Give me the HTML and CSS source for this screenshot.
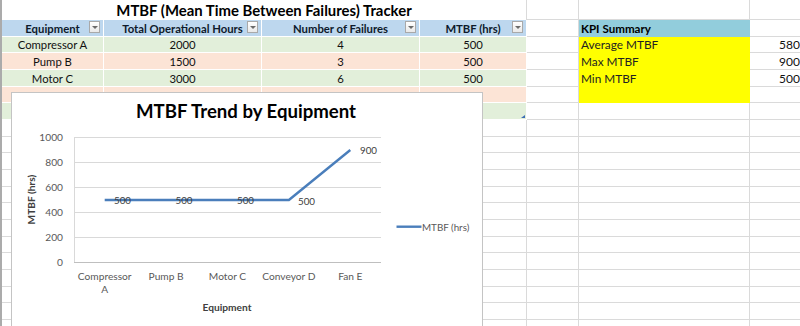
FILE: index.html
```html
<!DOCTYPE html>
<html lang="en">
<head>
    <meta charset="UTF-8">
    <title>MTBF Tracker</title>
    <link rel="stylesheet" href="styles.css">
</head>
<body>
    <div class="sheet">
        <!-- row 1: title -->
        <div class="c title">MTBF (Mean Time Between Failures) Tracker</div>
        <div class="c"></div><div class="c"></div><div class="c"></div>

        <!-- row 2: table header + kpi header -->
        <div class="c t hdr">Equipment<span class="filter"></span></div>
        <div class="c t hdr">Total Operational Hours<span class="filter"></span></div>
        <div class="c t hdr">Number of Failures<span class="filter"></span></div>
        <div class="c t hdr">MTBF (hrs)<span class="filter"></span></div>
        <div class="c"></div>
        <div class="c kpi-h">KPI Summary</div>
        <div class="c"></div>

        <div class="c t g">Compressor A</div><div class="c t g">2000</div><div class="c t g">4</div><div class="c t g">500</div>
        <div class="c"></div><div class="c y">Average MTBF</div><div class="c num">580</div>

        <div class="c t p">Pump B</div><div class="c t p">1500</div><div class="c t p">3</div><div class="c t p">500</div>
        <div class="c"></div><div class="c y">Max MTBF</div><div class="c num">900</div>

        <div class="c t g">Motor C</div><div class="c t g">3000</div><div class="c t g">6</div><div class="c t g">500</div>
        <div class="c"></div><div class="c y">Min MTBF</div><div class="c num">500</div>

        <div class="c t p"></div><div class="c t p"></div><div class="c t p"></div><div class="c t p"></div>
        <div class="c"></div><div class="c y"></div><div class="c"></div>

        <div class="c t g"></div><div class="c t g"></div><div class="c t g"></div><div class="c t g corner"><span class="resize"></span></div>
        <div class="c"></div><div class="c"></div><div class="c"></div>

        <!-- empty rows -->
        <div class="c"></div><div class="c"></div><div class="c"></div><div class="c"></div><div class="c"></div><div class="c"></div><div class="c"></div>
        <div class="c"></div><div class="c"></div><div class="c"></div><div class="c"></div><div class="c"></div><div class="c"></div><div class="c"></div>
        <div class="c"></div><div class="c"></div><div class="c"></div><div class="c"></div><div class="c"></div><div class="c"></div><div class="c"></div>
        <div class="c"></div><div class="c"></div><div class="c"></div><div class="c"></div><div class="c"></div><div class="c"></div><div class="c"></div>
        <div class="c"></div><div class="c"></div><div class="c"></div><div class="c"></div><div class="c"></div><div class="c"></div><div class="c"></div>
        <div class="c"></div><div class="c"></div><div class="c"></div><div class="c"></div><div class="c"></div><div class="c"></div><div class="c"></div>
        <div class="c"></div><div class="c"></div><div class="c"></div><div class="c"></div><div class="c"></div><div class="c"></div><div class="c"></div>
        <div class="c"></div><div class="c"></div><div class="c"></div><div class="c"></div><div class="c"></div><div class="c"></div><div class="c"></div>
        <div class="c"></div><div class="c"></div><div class="c"></div><div class="c"></div><div class="c"></div><div class="c"></div><div class="c"></div>
        <div class="c"></div><div class="c"></div><div class="c"></div><div class="c"></div><div class="c"></div><div class="c"></div><div class="c"></div>
        <div class="c"></div><div class="c"></div><div class="c"></div><div class="c"></div><div class="c"></div><div class="c"></div><div class="c"></div>
        <div class="c"></div><div class="c"></div><div class="c"></div><div class="c"></div><div class="c"></div><div class="c"></div><div class="c"></div>
        <div class="c"></div><div class="c"></div><div class="c"></div><div class="c"></div><div class="c"></div><div class="c"></div><div class="c"></div>

        <!-- floating chart -->
        <svg class="chart" width="472" height="240" viewBox="0 0 472 240">
            <rect x="0.5" y="0.5" width="471" height="260" fill="#fff" stroke="#c4c4c4"/>
            <text class="chart-title" x="235" y="26" text-anchor="middle">MTBF Trend by Equipment</text>

            <g stroke="#d9d9d9" stroke-width="1">
                <line x1="63" y1="45.5" x2="370" y2="45.5"/>
                <line x1="63" y1="70.5" x2="370" y2="70.5"/>
                <line x1="63" y1="95.5" x2="370" y2="95.5"/>
                <line x1="63" y1="120.5" x2="370" y2="120.5"/>
                <line x1="63" y1="145.5" x2="370" y2="145.5"/>
                <line x1="63.5" y1="45" x2="63.5" y2="170"/>
            </g>
            <line x1="63" y1="170.5" x2="370" y2="170.5" stroke="#bfbfbf"/>

            <g class="tick" text-anchor="end">
                <text x="52" y="49">1000</text>
                <text x="52" y="74">800</text>
                <text x="52" y="99">600</text>
                <text x="52" y="124">400</text>
                <text x="52" y="149">200</text>
                <text x="52" y="174">0</text>
            </g>

            <polyline points="93.7,108 155.1,108 216.5,108 277.9,108 339.3,58" fill="none" stroke="#4a7ebb" stroke-width="2.4" stroke-linejoin="round"/>

            <g class="dlabel">
                <text x="103" y="112">500</text>
                <text x="164.5" y="112">500</text>
                <text x="226" y="112">500</text>
                <text x="287" y="113">500</text>
                <text x="349" y="62">900</text>
            </g>

            <g class="tick" text-anchor="middle">
                <text x="93.7" y="188">Compressor</text>
                <text x="93.7" y="201">A</text>
                <text x="155.1" y="188">Pump B</text>
                <text x="216.5" y="188">Motor C</text>
                <text x="277.9" y="188">Conveyor D</text>
                <text x="339.3" y="188">Fan E</text>
            </g>

            <text class="axis-title" x="216" y="219" text-anchor="middle">Equipment</text>
            <text class="axis-title" x="0" y="0" text-anchor="middle" transform="translate(23.5 107.5) rotate(-90)">MTBF (hrs)</text>

            <line x1="385.5" y1="134.7" x2="410.5" y2="134.7" stroke="#4a7ebb" stroke-width="2.4"/>
            <text class="legend" x="411" y="138.5">MTBF (hrs)</text>
        </svg>
    </div>
</body>
</html>
```

FILE: styles.css
```css
body {
    margin: 0;
    background: #fff;
    overflow: hidden;
    font-family: Lato, "Noto Sans", sans-serif;
}

.sheet {
    position: relative;
    display: grid;
    grid-template-columns: 102px 158px 158px 107px 52px 171px 52px;
    grid-template-rows: 20px;
    grid-auto-rows: 16.667px;
    width: 800px;
    height: 326px;
    border-left: 2px solid #ababab;
    overflow: hidden;
}

.c {
    box-sizing: border-box;
    border-right: 1px solid #dadada;
    border-bottom: 1px solid #dadada;
    display: flex;
    align-items: center;
    white-space: nowrap;
    font-size: 11.3px;
    color: #111;
    padding-top: 1px;
}

.title {
    grid-column: span 4;
    justify-content: center;
    font-weight: bold;
    font-size: 14.9px;
    color: #000;
    border-bottom: none;
    padding-top: 0;
}

/* excel table */
.t {
    justify-content: center;
    border-color: #fff;
}

.hdr {
    position: relative;
    background: #bdd7ee;
    font-weight: bold;
    color: #0e1a2b;
}

.g {
    background: #e2efda;
}

.p {
    background: #fce4d6;
}

.filter {
    position: absolute;
    right: 3px;
    top: 1px;
    width: 11px;
    height: 12px;
    box-sizing: border-box;
    border: 1px solid #a9a9a9;
    background: linear-gradient(#ffffff, #e9e9e9);
}

.filter::after {
    content: "";
    position: absolute;
    left: 2px;
    top: 4px;
    border-left: 3px solid transparent;
    border-right: 3px solid transparent;
    border-top: 3px solid #6b6b6b;
}

.corner {
    position: relative;
}

.resize {
    position: absolute;
    right: 1px;
    bottom: 1px;
    width: 0;
    height: 0;
    border-left: 4px solid transparent;
    border-bottom: 3px solid #3d6db5;
}

/* kpi block */
.kpi-h {
    background: #92cddc;
    border-color: #92cddc;
    font-weight: bold;
    font-size: 11.6px;
    color: #000;
    padding-left: 2px;
}

.y {
    background: #ffff00;
    border-color: #ffff00;
    font-size: 11.8px;
    padding-left: 2px;
    color: #222;
}

.num {
    justify-content: flex-end;
    font-size: 12px;
    padding-right: 1px;
}

/* chart */
.chart {
    position: absolute;
    left: 9px;
    top: 92px;
    font-family: Lato, "Noto Sans", sans-serif;
}

.chart-title {
    font-size: 18.6px;
    font-weight: bold;
    fill: #000;
}

.tick {
    font-size: 10.2px;
    fill: #595959;
}

.dlabel {
    font-size: 9.8px;
    fill: #404040;
}

.axis-title {
    font-size: 10.2px;
    font-weight: bold;
    fill: #404040;
}

.legend {
    font-size: 9.8px;
    fill: #595959;
}
```
